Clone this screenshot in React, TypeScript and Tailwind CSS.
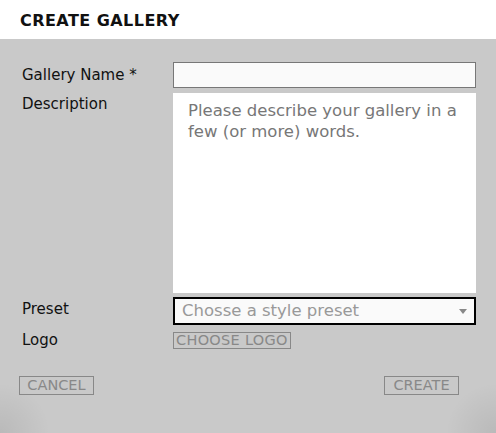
import React from "react";

const font = { fontFamily: '"DejaVu Sans", "Liberation Sans", Arial, sans-serif' };

export default function App() {
  return (
    <div className="w-[496px] h-[433px] flex flex-col overflow-hidden" style={font}>
      <header className="h-[39px] bg-white flex items-center px-[20px] pt-[2px]">
        <h1 className="text-[16px] font-bold text-[#111] tracking-[0.45px] uppercase">Create Gallery</h1>
      </header>

      <div className="flex-1 bg-[#c9c9c9] bg-[radial-gradient(circle_at_0%_100%,rgba(0,0,0,0.08),transparent_50px),radial-gradient(circle_at_100%_100%,rgba(0,0,0,0.08),transparent_50px)] pl-[19px] pr-[20px] pt-[23px]">
        <div className="grid grid-cols-[151px_1fr] pl-[3px]">
          <label className="text-[15px] text-[#111] leading-[26px]">Gallery Name *</label>
          <input
            type="text"
            className="h-[26px] w-full border border-[#777] bg-[#fafafa] outline-none px-2 text-[15px]"
          />

          <label className="mt-[5px] text-[15px] text-[#111] leading-[22px]">Description</label>
          <textarea
            className="mt-[5px] h-[200px] w-full bg-white resize-none outline-none pl-[15px] pr-[10px] pt-[7px] text-[16.5px] leading-[21px] text-[#333] placeholder:text-[#777]"
            placeholder="Please describe your gallery in a few (or more) words."
          />

          <label className="mt-[4px] text-[15px] text-[#111] leading-[24px]">Preset</label>
          <div className="mt-[4px] h-[28px] w-full border-2 border-black bg-[#fafafa] flex items-center justify-between pl-[7px] pr-[7px]">
            <span className="text-[16.5px] text-[#999]">Chosse a style preset</span>
            <svg width="8" height="5" viewBox="0 0 8 5" className="mt-[1px]">
              <path d="M0 0h8L4 5z" fill="#888" />
            </svg>
          </div>

          <label className="mt-[5px] text-[15px] text-[#111] leading-[20px]">Logo</label>
          <div className="mt-[7px] flex">
            <button className="h-[17px] border border-[#888] px-[2px] text-[14.5px] tracking-[0.3px] leading-[15px] text-[#888] uppercase">
              Choose Logo
            </button>
          </div>
        </div>

        <div className="mt-[26px] flex justify-between pr-[17px]">
          <button className="h-[19px] w-[75px] border border-[#888] text-[14.5px] leading-[17px] text-[#888] uppercase">
            Cancel
          </button>
          <button className="h-[19px] w-[75px] border border-[#888] text-[14.5px] leading-[17px] text-[#888] uppercase">
            Create
          </button>
        </div>
      </div>
    </div>
  );
}
